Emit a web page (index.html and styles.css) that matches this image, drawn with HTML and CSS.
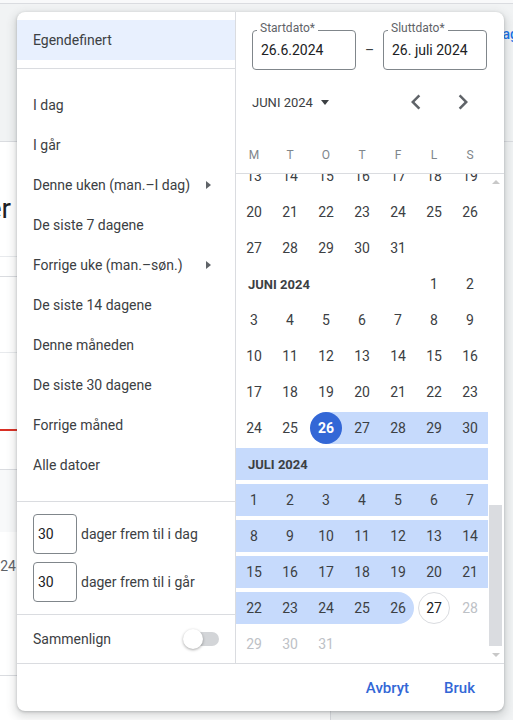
FILE: index.html
```html
<!DOCTYPE html>
<html lang="no">
<head>
    <meta charset="UTF-8">
    <meta name="viewport" content="width=device-width, initial-scale=1.0">
    <title>Datoperiode</title>
    <link rel="stylesheet" href="styles.css">
</head>
<body>
    <div class="page">
        <div class="topbar"></div>
        <div class="page-head">
            <a class="head-link">I dag</a>
        </div>
        <div class="page-main">
            <div class="report-card">
                <div class="metric"><span class="metric-cut">Visninger</span></div>
                <div class="card-gap"></div>
                <div class="chart">
                    <div class="grid-line"></div>
                    <div class="trend-line"></div>
                </div>
                <div class="table-head"></div>
                <div class="table-row"><span class="cell-cut">26.6.2024</span></div>
                <div class="table-row-next">Periode</div>
            </div>
        </div>
    </div>

    <div class="picker">
        <div class="picker-body">
            <aside class="presets">
                <div class="preset-custom">Egendefinert</div>
                <ul class="preset-list">
                    <li>I dag</li>
                    <li>I går</li>
                    <li>Denne uken (man.–I dag)<span class="sub-arrow"></span></li>
                    <li>De siste 7 dagene</li>
                    <li>Forrige uke (man.–søn.)<span class="sub-arrow"></span></li>
                    <li>De siste 14 dagene</li>
                    <li>Denne måneden</li>
                    <li>De siste 30 dagene</li>
                    <li>Forrige måned</li>
                    <li>Alle datoer</li>
                </ul>
                <div class="preset-relative">
                    <div class="rel-row"><span class="num-box">30</span>dager frem til i dag</div>
                    <div class="rel-row"><span class="num-box">30</span>dager frem til i går</div>
                </div>
                <div class="compare-row">
                    <span>Sammenlign</span>
                    <span class="toggle"><span class="toggle-track"></span><span class="toggle-knob"></span></span>
                </div>
            </aside>

            <section class="calendar">
                <div class="date-fields">
                    <div class="date-field"><span class="field-label">Startdato*</span><span class="field-value">26.6.2024</span></div>
                    <span class="range-dash">–</span>
                    <div class="date-field"><span class="field-label">Sluttdato*</span><span class="field-value">26. juli 2024</span></div>
                </div>

                <div class="month-nav">
                    <span class="month-select">JUNI 2024<span class="caret"></span></span>
                    <span class="nav-arrows">
                        <svg width="30" height="30" viewBox="0 0 24 24"><path d="M15.41 7.41L14 6l-6 6 6 6 1.41-1.41L10.83 12z"/></svg>
                        <svg width="30" height="30" viewBox="0 0 24 24"><path d="M10 6L8.59 7.41 13.17 12l-4.58 4.59L10 18l6-6z"/></svg>
                    </span>
                </div>

                <div class="weekdays">
                    <div class="weekday-grid">
                        <span>M</span><span>T</span><span>O</span><span>T</span><span>F</span><span>L</span><span>S</span>
                    </div>
                </div>

                <div class="cal-scroll">
                    <div class="cal-view">
                        <div class="cal-rows">
                            <div class="week"><span>13</span><span>14</span><span>15</span><span>16</span><span>17</span><span>18</span><span>19</span></div>
                            <div class="week"><span>20</span><span>21</span><span>22</span><span>23</span><span>24</span><span>25</span><span>26</span></div>
                            <div class="week"><span>27</span><span>28</span><span>29</span><span>30</span><span>31</span><span></span><span></span></div>
                            <div class="week"><span class="month-label">JUNI 2024</span><span>1</span><span>2</span></div>
                            <div class="week"><span>3</span><span>4</span><span>5</span><span>6</span><span>7</span><span>8</span><span>9</span></div>
                            <div class="week"><span>10</span><span>11</span><span>12</span><span>13</span><span>14</span><span>15</span><span>16</span></div>
                            <div class="week"><span>17</span><span>18</span><span>19</span><span>20</span><span>21</span><span>22</span><span>23</span></div>
                            <div class="week"><span>24</span><span>25</span><span class="range-start"><b class="day selected">26</b></span><span class="in">27</span><span class="in">28</span><span class="in">29</span><span class="in">30</span></div>
                            <div class="week range"><span class="month-label full">JULI 2024</span></div>
                            <div class="week range"><span>1</span><span>2</span><span>3</span><span>4</span><span>5</span><span>6</span><span>7</span></div>
                            <div class="week range"><span>8</span><span>9</span><span>10</span><span>11</span><span>12</span><span>13</span><span>14</span></div>
                            <div class="week range"><span>15</span><span>16</span><span>17</span><span>18</span><span>19</span><span>20</span><span>21</span></div>
                            <div class="week"><span class="in">22</span><span class="in">23</span><span class="in">24</span><span class="in">25</span><span class="range-end"><b class="day">26</b></span><span><b class="day today">27</b></span><span class="off">28</span></div>
                            <div class="week"><span class="off">29</span><span class="off">30</span><span class="off">31</span></div>
                        </div>
                    </div>
                    <div class="scrollbar">
                        <span class="sb-btn"><span class="sb-up"></span></span>
                        <span class="sb-track"><span class="sb-thumb"></span></span>
                        <span class="sb-btn"><span class="sb-down"></span></span>
                    </div>
                </div>
            </section>
        </div>

        <div class="picker-footer">
            <button class="text-btn">Avbryt</button>
            <button class="text-btn">Bruk</button>
        </div>
    </div>
</body>
</html>
```

FILE: styles.css
```css
* {
    margin: 0;
    padding: 0;
    box-sizing: border-box;
}

html, body {
    width: 513px;
    height: 720px;
    overflow: hidden;
}

body {
    font-family: Roboto, 'Liberation Sans', sans-serif;
    background: #f1f3f4;
    color: #3c4043;
    font-size: 14px;
    position: relative;
}

/* page behind the dialog */

.topbar {
    height: 4px;
    background: #f8f9fa;
    border-bottom: 1px solid #dadce0;
}

.page-head {
    height: 138px;
    border-bottom: 1px solid #dadce0;
    display: flex;
    justify-content: flex-end;
    padding-top: 22px;
}

.head-link {
    color: #1a73e8;
    font-weight: 500;
    line-height: 16px;
    height: 16px;
    margin-right: -5px;
    white-space: nowrap;
}

.page-main {
    display: flex;
    height: 578px;
}

.report-card {
    width: 331px;
    background: #fff;
    border-right: 1px solid #dadce0;
}

.metric {
    height: 115px;
    display: flex;
    padding-top: 50px;
    border-bottom: 1px solid #e8eaed;
    font-size: 28px;
    line-height: 33px;
    color: #202124;
    white-space: nowrap;
}

.metric-cut {
    display: flex;
    justify-content: flex-end;
    width: 11px;
}

.card-gap {
    height: 20px;
    border-bottom: 1px solid #dadce0;
}

.chart {
    height: 192px;
    padding-top: 75px;
}

.grid-line {
    height: 1px;
    background: #e8eaed;
}

.trend-line {
    margin-top: 76px;
    height: 2px;
    background: #d93025;
}

.table-head {
    height: 63px;
    border-top: 1px solid #dadce0;
    background: #f8f9fa;
}

.table-row {
    height: 144px;
    padding-top: 24px;
    border-bottom: 1px solid #dadce0;
    color: #5f6368;
    line-height: 20px;
    display: flex;
}

.cell-cut {
    display: flex;
    justify-content: flex-end;
    width: 16px;
    white-space: nowrap;
}

.table-row-next {
    padding: 40px 0 0 65px;
    line-height: 20px;
    color: #3c4043;
}

/* date picker dialog */

.picker {
    position: absolute;
    left: 17px;
    top: 12px;
    width: 487px;
    height: 699px;
    background: #fff;
    border-radius: 8px;
    box-shadow: 0 1px 3px rgba(60, 64, 67, 0.3), 0 4px 8px 3px rgba(60, 64, 67, 0.15);
    display: flex;
    flex-direction: column;
    overflow: hidden;
}

.picker-body {
    display: flex;
    height: 651px;
}

.presets {
    width: 219px;
    border-right: 1px solid #dadce0;
    padding-top: 8px;
    display: flex;
    flex-direction: column;
}

.preset-custom {
    height: 40px;
    line-height: 40px;
    padding-left: 16px;
    background: #e8f0fe;
    margin-bottom: 8px;
}

.preset-list {
    list-style: none;
    border-top: 1px solid #dadce0;
    border-bottom: 1px solid #dadce0;
    padding: 16px 0;
}

.preset-list li {
    height: 40px;
    display: flex;
    align-items: center;
    padding: 0 24px 0 16px;
    white-space: nowrap;
}

.sub-arrow {
    margin-left: auto;
    width: 0;
    height: 0;
    border-top: 4px solid transparent;
    border-bottom: 4px solid transparent;
    border-left: 5px solid #5f6368;
}

.preset-relative {
    padding: 12px 16px;
    display: flex;
    flex-direction: column;
    gap: 8px;
    border-bottom: 1px solid #dadce0;
}

.rel-row {
    display: flex;
    align-items: center;
    white-space: nowrap;
}

.num-box {
    width: 44px;
    height: 40px;
    border: 1px solid #80868b;
    border-radius: 4px;
    padding-left: 4px;
    line-height: 38px;
    margin-right: 4px;
    color: #202124;
}

.compare-row {
    height: 48px;
    display: flex;
    align-items: center;
    justify-content: space-between;
    padding: 0 16px;
}

.toggle {
    position: relative;
    width: 36px;
    height: 20px;
    display: flex;
    align-items: center;
    justify-content: flex-end;
}

.toggle-track {
    width: 34px;
    height: 14px;
    border-radius: 7px;
    background: #d3d5d8;
}

.toggle-knob {
    position: absolute;
    left: 0;
    top: 0;
    width: 20px;
    height: 20px;
    border-radius: 50%;
    background: #fff;
    box-shadow: 0 1px 3px rgba(0, 0, 0, 0.35);
}

.calendar {
    width: 268px;
    display: flex;
    flex-direction: column;
}

.date-fields {
    display: flex;
    align-items: center;
    justify-content: space-between;
    padding: 18px 17px 0 16px;
}

.date-field {
    position: relative;
    width: 104px;
    height: 40px;
    border: 1px solid #80868b;
    border-radius: 4px;
    padding: 9px 0 0 8px;
    color: #202124;
    white-space: nowrap;
}

.field-value {
    display: block;
    line-height: 20px;
}

.field-label {
    position: absolute;
    top: -10px;
    left: 4px;
    padding: 0 3px;
    background: #fff;
    font-size: 12px;
    line-height: 14px;
    color: #5f6368;
}

.range-dash {
    color: #3c4043;
}

.month-nav {
    height: 32px;
    margin-top: 16px;
    display: flex;
    align-items: center;
    justify-content: space-between;
    padding: 0 26px 0 16px;
}

.month-select {
    display: flex;
    align-items: center;
    font-size: 13px;
}

.caret {
    margin-left: 8px;
    border-left: 4px solid transparent;
    border-right: 4px solid transparent;
    border-top: 5px solid #3c4043;
}

.nav-arrows {
    display: flex;
    gap: 17px;
}

.nav-arrows svg {
    fill: #5f6368;
    display: block;
}

.weekdays {
    margin-top: 19px;
    height: 37px;
    border-bottom: 1px solid #dadce0;
}

.weekday-grid {
    display: grid;
    grid-template-columns: repeat(7, 36px);
    height: 36px;
    align-items: center;
    justify-items: center;
    font-size: 12px;
    color: #80868b;
}

.cal-scroll {
    display: flex;
    height: 489px;
}

.cal-view {
    width: 252px;
    overflow: hidden;
}

.cal-rows {
    display: flex;
    flex-direction: column;
    margin-top: -16px;
}

.week {
    display: grid;
    grid-template-columns: repeat(7, 36px);
    height: 32px;
    margin: 2px 0;
}

.week > span {
    display: flex;
    align-items: center;
    justify-content: center;
    height: 32px;
}

.week.range,
.week > .in {
    background: #c6dafc;
}

.week > .month-label {
    grid-column: span 5;
    justify-content: flex-start;
    padding-left: 12px;
    font-size: 13px;
    font-weight: 700;
}

.week > .month-label.full {
    grid-column: span 7;
}

.day {
    width: 32px;
    height: 32px;
    border-radius: 50%;
    display: flex;
    align-items: center;
    justify-content: center;
    font-weight: 400;
}

.range-start {
    background: linear-gradient(to right, transparent 50%, #c6dafc 50%);
}

.range-end {
    background: linear-gradient(to right, #c6dafc 50%, transparent 50%);
}

.range-end .day {
    background: #c6dafc;
}

.day.selected {
    background: #3367d6;
    color: #fff;
    font-weight: 700;
}

.day.today {
    border: 1px solid #dadce0;
    color: #202124;
}

.week > .off {
    color: #bdc1c6;
}

.scrollbar {
    width: 16px;
    display: flex;
    flex-direction: column;
}

.sb-btn {
    height: 16px;
    display: flex;
    align-items: center;
    justify-content: center;
}

.sb-up {
    border-left: 4px solid transparent;
    border-right: 4px solid transparent;
    border-bottom: 4px solid #c8c8c8;
}

.sb-down {
    border-left: 4px solid transparent;
    border-right: 4px solid transparent;
    border-top: 4px solid #c8c8c8;
}

.sb-track {
    flex: 1;
    display: flex;
    flex-direction: column;
}

.sb-thumb {
    margin: 315px 0 0 1px;
    width: 13px;
    height: 141px;
    background: #dadce0;
}

.picker-footer {
    height: 48px;
    border-top: 1px solid #dadce0;
    display: flex;
    align-items: center;
    justify-content: flex-end;
    gap: 19px;
    padding-right: 21px;
}

.text-btn {
    background: none;
    border: none;
    font-family: inherit;
    font-size: 15px;
    font-weight: 500;
    color: #3367d6;
    padding: 0 8px;
    height: 36px;
    cursor: pointer;
}
```
